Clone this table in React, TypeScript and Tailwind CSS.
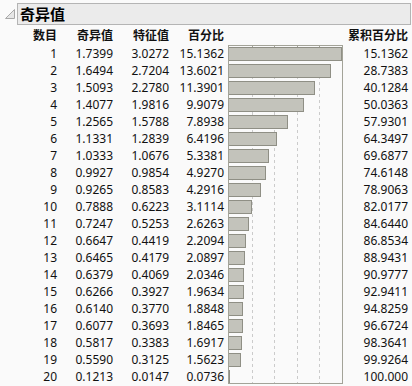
const rows = [
  [1, "1.7399", "3.0272", "15.1362", "15.1362"],
  [2, "1.6494", "2.7204", "13.6021", "28.7383"],
  [3, "1.5093", "2.2780", "11.3901", "40.1284"],
  [4, "1.4077", "1.9816", "9.9079", "50.0363"],
  [5, "1.2565", "1.5788", "7.8938", "57.9301"],
  [6, "1.1331", "1.2839", "6.4196", "64.3497"],
  [7, "1.0333", "1.0676", "5.3381", "69.6877"],
  [8, "0.9927", "0.9854", "4.9270", "74.6148"],
  [9, "0.9265", "0.8583", "4.2916", "78.9063"],
  [10, "0.7888", "0.6223", "3.1114", "82.0177"],
  [11, "0.7247", "0.5253", "2.6263", "84.6440"],
  [12, "0.6647", "0.4419", "2.2094", "86.8534"],
  [13, "0.6465", "0.4179", "2.0897", "88.9431"],
  [14, "0.6379", "0.4069", "2.0346", "90.9777"],
  [15, "0.6266", "0.3927", "1.9634", "92.9411"],
  [16, "0.6140", "0.3770", "1.8848", "94.8259"],
  [17, "0.6077", "0.3693", "1.8465", "96.6724"],
  [18, "0.5817", "0.3383", "1.6917", "98.3641"],
  [19, "0.5590", "0.3125", "1.5623", "99.9264"],
  [20, "0.1213", "0.0147", "0.0736", "100.000"],
];

// axis 0..15 over 113px
const scale = 113 / 15;

function TextCol({ title, width, idx }: { title: string; width: string; idx: number }) {
  return (
    <div className={`${width} flex flex-col text-right`}>
      <div className="h-[18px] leading-[18px] font-bold">{title}</div>
      {rows.map((r) => (
        <div key={r[0]} className="h-[17px] leading-[17px]">
          {r[idx]}
        </div>
      ))}
    </div>
  );
}

export default function App() {
  return (
    <div className="w-[412px] h-[386px] overflow-hidden bg-[#fafafa] text-[12px] text-[#111] font-['Noto_Sans','Noto_Sans_CJK_SC',sans-serif]">
      <div className="flex items-start pt-[3px] pr-[1px]">
        <svg width="17" height="22" viewBox="0 0 17 22">
          <polygon points="5.5,15.5 14.5,6.5 14.5,15.5" fill="#e6e6e6" stroke="#a8a8a8" strokeWidth="1" />
        </svg>
        <div className="flex-1 h-[22px] border border-[#b4b4b4] bg-[#ebebeb] flex items-center pl-[2px] text-[15px] font-bold text-black font-['Noto_Sans_CJK_SC',sans-serif]">
          奇异值
        </div>
      </div>
      <div className="flex mt-[2px]">
        <TextCol title="数目" width="w-[57px]" idx={0} />
        <TextCol title="奇异值" width="w-[56px]" idx={1} />
        <TextCol title="特征值" width="w-[56px]" idx={2} />
        <TextCol title="百分比" width="w-[55px]" idx={3} />
        <div className="w-[115px] ml-[4px] flex flex-col">
          <div className="h-[18px]" />
          <div className="relative h-[339px] border border-[#a3a398] overflow-hidden">
            <svg className="absolute inset-0" width="113" height="337">
              {[1, 2, 3, 4].map((i) => {
                const x = Math.round(i * 22.6) + 0.5;
                return (
                  <g key={i}>
                    <line x1={x} y1={0} x2={x} y2={337} stroke="#cbcbcb" strokeDasharray="3 3" />
                    <line x1={x} y1={0} x2={x} y2={3} stroke="#a3a398" />
                  </g>
                );
              })}
            </svg>
            <div className="relative flex flex-col gap-[3px] pt-[1px]">
              {rows.map((r) => (
                <div
                  key={r[0]}
                  className="h-[14px] bg-[#c3c3bb] border border-[#8f8f85] -ml-px"
                  style={{ width: Math.max(2, Math.min(114, parseFloat(r[3] as string) * scale + 1)) }}
                />
              ))}
            </div>
          </div>
        </div>
        <TextCol title="累积百分比" width="w-[65px]" idx={4} />
      </div>
    </div>
  );
}
